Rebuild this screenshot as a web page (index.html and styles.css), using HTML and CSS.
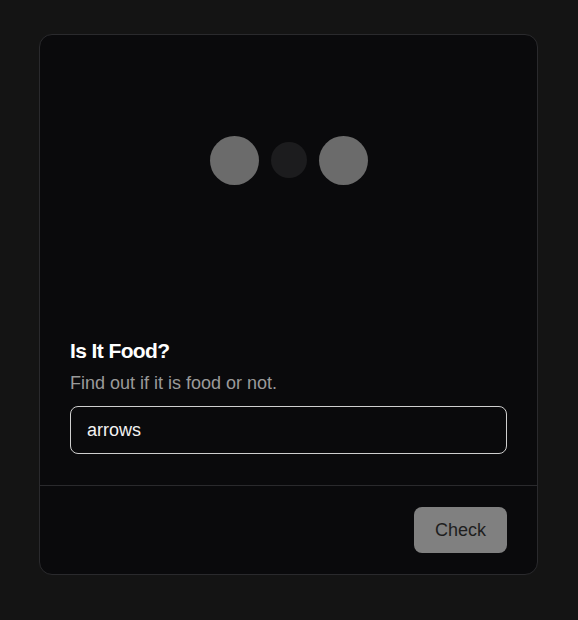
FILE: index.html
```html
<!DOCTYPE html>
<html>
<head>
<meta charset="utf-8">
<link rel="stylesheet" href="styles.css">
</head>
<body>
<div class="card">
  <div class="content">
    <div class="art">
      <span class="dot big"></span>
      <span class="dot small"></span>
      <span class="dot big"></span>
    </div>
    <h2 class="title">Is It Food?</h2>
    <p class="sub">Find out if it is food or not.</p>
    <input class="field" type="text" value="arrows">
  </div>
  <div class="footer">
    <button class="btn">Check</button>
  </div>
</div>
</body>
</html>
```
FILE: styles.css
```css
* { box-sizing: border-box; }
html, body { margin: 0; padding: 0; }
body {
  background: #141414;
  font-family: "Liberation Sans", Arial, sans-serif;
  width: 578px;
  height: 620px;
  overflow: hidden;
  padding: 34px 0 0 39px;
}
.card {
  width: 499px;
  height: 541px;
  background: #0a0a0c;
  border: 1px solid #2a2a2d;
  border-radius: 13px;
  display: flex;
  flex-direction: column;
}
.content {
  padding: 0 30px;
  flex: 1;
}
.art {
  height: 250px;
  display: flex;
  align-items: center;
  justify-content: center;
  gap: 12px;
}
.dot { border-radius: 50%; display: block; }
.dot.big { width: 49px; height: 49px; background: #6b6b6b; }
.dot.small { width: 36px; height: 36px; background: #1c1c1e; }
.title {
  margin: 54px 0 0;
  font-size: 21px;
  line-height: 24px;
  letter-spacing: -0.6px;
  font-weight: 700;
  color: #ffffff;
}
.sub {
  margin: 8px 0 0;
  font-size: 18px;
  line-height: 24px;
  color: #9a9a9a;
}
.field {
  display: block;
  margin-top: 11px;
  width: 100%;
  height: 48px;
  background: #0a0a0c;
  border: 1.5px solid #cfcfcf;
  border-radius: 8px;
  padding: 0 16px;
  font-family: "Liberation Sans", Arial, sans-serif;
  font-size: 18px;
  color: #f2f2f2;
  outline: none;
}
.footer {
  border-top: 1px solid #2a2a2d;
  padding: 21px 30px 21px;
  display: flex;
  justify-content: flex-end;
}
.btn {
  width: 93px;
  height: 46px;
  background: #808080;
  border: none;
  border-radius: 8px;
  font-family: "Liberation Sans", Arial, sans-serif;
  font-size: 18px;
  color: #1e1e1e;
}
```
